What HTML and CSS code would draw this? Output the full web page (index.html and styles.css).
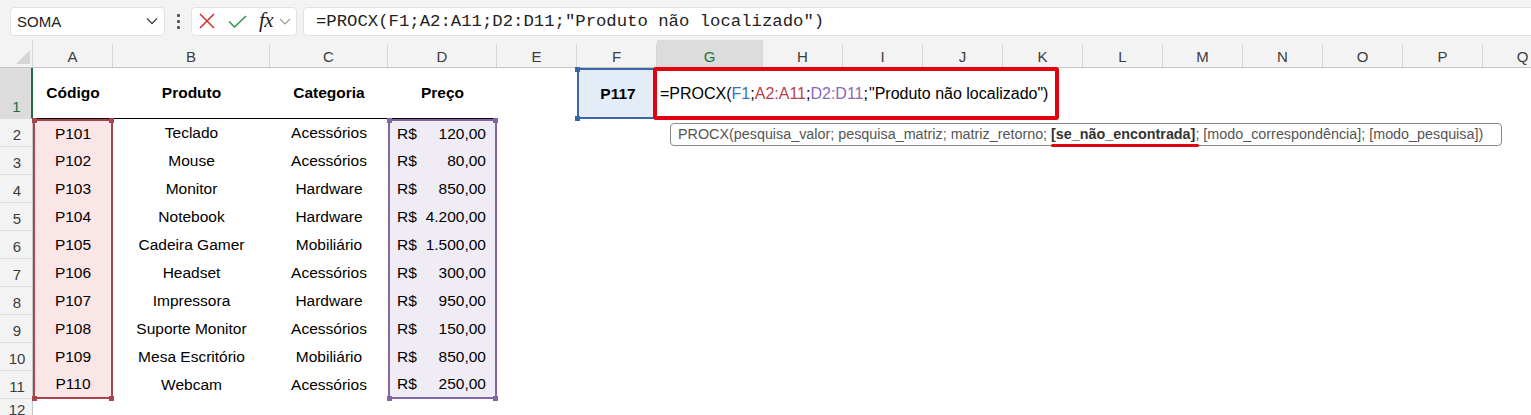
FILE: index.html
```html
<!DOCTYPE html>
<html lang="pt-BR">
<head>
<meta charset="utf-8">
<title>Excel PROCX</title>
<link rel="stylesheet" href="styles.css">
</head>
<body>
<div class="toolbar">
  <div class="namebox"><span>SOMA</span>
    <svg class="chev" width="12" height="8" viewBox="0 0 12 8"><polyline points="1,1.5 6,6.5 11,1.5" fill="none" stroke="#444" stroke-width="1.3"/></svg>
  </div>
  <div class="dots"><i></i><i></i><i></i></div>
  <div class="iconbox">
    <svg class="ix" width="16" height="16" viewBox="0 0 16 16"><path d="M1 1 L15 15 M15 1 L1 15" stroke="#d13438" stroke-width="1.6" fill="none"/></svg>
    <svg class="ic" width="19" height="13" viewBox="0 0 19 13"><polyline points="1,6.5 6.5,12 18,1" stroke="#3d9b4f" stroke-width="1.7" fill="none"/></svg>
    <span class="fx">fx</span>
    <svg class="iv" width="12" height="7" viewBox="0 0 12 7"><polyline points="1,1 6,6 11,1" fill="none" stroke="#9a9a9a" stroke-width="1.2"/></svg>
  </div>
  <div class="formulabox">=PROCX(F1;A2:A11;D2:D11;"Produto não localizado")</div>
</div>

<div class="sheet">
  <div class="row hdr">
    <div class="corner"></div>
    <div class="ch">A</div><div class="ch">B</div><div class="ch">C</div><div class="ch">D</div><div class="ch">E</div><div class="ch">F</div><div class="ch sel">G</div><div class="ch">H</div><div class="ch">I</div><div class="ch">J</div><div class="ch">K</div><div class="ch">L</div><div class="ch">M</div><div class="ch">N</div><div class="ch">O</div><div class="ch">P</div><div class="ch">Q</div>
  </div>

  <div class="row r1">
    <div class="rh sel">1</div>
    <div class="c b th">Código</div><div class="c b th">Produto</div><div class="c b th">Categoria</div><div class="c b th">Preço</div>
    <div class="c"></div>
    <div class="c b f1">P117</div>
    <div class="c edit"><span>=PROCX(</span><span class="kb">F1</span><span>;</span><span class="kr">A2:A11</span><span>;</span><span class="kp">D2:D11</span><span>;</span><span class="caret"></span><span>"Produto não localizado")</span></div>
  </div>

  <div class="row"><div class="rh">2</div><div class="c ra top">P101</div><div class="c">Teclado</div><div class="c">Acessórios</div><div class="c rd top acc"><span>R$</span><span>120,00</span></div></div>
  <div class="row"><div class="rh">3</div><div class="c ra">P102</div><div class="c">Mouse</div><div class="c">Acessórios</div><div class="c rd acc"><span>R$</span><span>80,00</span></div></div>
  <div class="row"><div class="rh">4</div><div class="c ra">P103</div><div class="c">Monitor</div><div class="c">Hardware</div><div class="c rd acc"><span>R$</span><span>850,00</span></div></div>
  <div class="row"><div class="rh">5</div><div class="c ra">P104</div><div class="c">Notebook</div><div class="c">Hardware</div><div class="c rd acc"><span>R$</span><span>4.200,00</span></div></div>
  <div class="row"><div class="rh">6</div><div class="c ra">P105</div><div class="c">Cadeira Gamer</div><div class="c">Mobiliário</div><div class="c rd acc"><span>R$</span><span>1.500,00</span></div></div>
  <div class="row"><div class="rh">7</div><div class="c ra">P106</div><div class="c">Headset</div><div class="c">Acessórios</div><div class="c rd acc"><span>R$</span><span>300,00</span></div></div>
  <div class="row"><div class="rh">8</div><div class="c ra">P107</div><div class="c">Impressora</div><div class="c">Hardware</div><div class="c rd acc"><span>R$</span><span>950,00</span></div></div>
  <div class="row"><div class="rh">9</div><div class="c ra">P108</div><div class="c">Suporte Monitor</div><div class="c">Acessórios</div><div class="c rd acc"><span>R$</span><span>150,00</span></div></div>
  <div class="row"><div class="rh">10</div><div class="c ra">P109</div><div class="c">Mesa Escritório</div><div class="c">Mobiliário</div><div class="c rd acc"><span>R$</span><span>850,00</span></div></div>
  <div class="row"><div class="rh">11</div><div class="c ra bot">P110</div><div class="c">Webcam</div><div class="c">Acessórios</div><div class="c rd bot acc"><span>R$</span><span>250,00</span></div></div>
  <div class="row"><div class="rh last">12</div></div>

  <div class="redbox"></div>
  <div class="tooltip">PROCX(pesquisa_valor; pesquisa_matriz; matriz_retorno; <b class="mark">[se_não_encontrada]</b>; [modo_correspondência]; [modo_pesquisa])</div>
</div>
</body>
</html>
```

FILE: styles.css
```css
* { box-sizing: border-box; }
body {
  margin: 0;
  width: 1531px;
  height: 415px;
  overflow: hidden;
  background: #fff;
  font-family: "Liberation Sans", Arial, sans-serif;
  color: #000;
}

.toolbar {
  height: 40px;
  background: #f3f3f3;
  display: flex;
  align-items: center;
  padding-left: 10px;
  padding-top: 4px;
  padding-bottom: 2px;
  white-space: nowrap;
  overflow: hidden;
}
.toolbar > * { flex-shrink: 0; }
.namebox {
  width: 155px;
  height: 29px;
  background: #fff;
  border: 1px solid #e2e2e2;
  border-radius: 4px;
  display: flex;
  align-items: center;
  justify-content: space-between;
  padding: 0 6px 0 6px;
  font-size: 15px;
  color: #222;
}
.dots {
  width: 26px;
  display: flex;
  flex-direction: column;
  align-items: center;
  gap: 3px;
}
.dots i { display: block; width: 3px; height: 3px; background: #555; border-radius: 1px; }
.iconbox {
  width: 106px;
  height: 29px;
  background: #fff;
  border: 1px solid #e2e2e2;
  border-radius: 4px;
  display: flex;
  align-items: center;
  padding-left: 7px;
}
.ix { margin-right: 13px; }
.ic { margin-right: 12px; }
.fx {
  font-family: "Liberation Serif", "Times New Roman", serif;
  font-style: italic;
  font-size: 21px;
  color: #222;
  letter-spacing: -0.5px;
  margin-right: 6px;
  margin-top: -2px;
}
.formulabox {
  margin-left: 6px;
  width: 1240px;
  height: 29px;
  background: #fff;
  border: 1px solid #e2e2e2;
  border-radius: 4px;
  display: flex;
  align-items: center;
  padding-left: 12px;
  font-family: "Liberation Mono", "Courier New", monospace;
  font-size: 17.3px;
  color: #222;
}

.sheet { position: relative; }
.row {
  display: grid;
  grid-template-columns: 33px 80px 157px 118px 109px 80px 80px 106px 80px 80px 80px 80px 80px 80px 80px 80px 80px 80px;
  height: 28px;
}
.row.r1 { height: 51px; }

.hdr { background: #f3f3f3; border-bottom: 1px solid #c6c6c6; }
.corner { position: relative; border-right: 1px solid #d6d6d6; }
.corner::after {
  content: "";
  position: absolute;
  right: 2px;
  bottom: 3px;
  width: 0; height: 0;
  border-left: 14px solid transparent;
  border-bottom: 14px solid #d6d6d6;
}
.ch {
  display: flex;
  align-items: center;
  justify-content: center;
  padding-top: 2px;
  font-size: 15px;
  color: #3c3c3c;
  border-right: 1px solid #d6d6d6;
  margin-top: 4px;
}
.ch.sel { background: #dcdcdc; color: #1d7044; margin-top: 0; padding-top: 6px; }

.rh {
  background: #f3f3f3;
  border-right: 1px solid #c6c6c6;
  border-bottom: 1px solid #dedede;
  display: flex;
  align-items: flex-end;
  justify-content: center;
  padding-bottom: 3px;
  padding-left: 2px;
  font-size: 15px;
  color: #3c3c3c;
}
.rh.last { padding-bottom: 0; align-items: flex-start; padding-top: 2px; }
.rh.sel { background: #dcdcdc; color: #1d7044; border-right: 2px solid #1d7044; }

.c {
  display: flex;
  align-items: center;
  justify-content: center;
  font-size: 15.5px;
  white-space: nowrap;
  position: relative;
}
.b { font-weight: bold; }
.th { border-bottom: 1px solid #000; }

.f1 {
  background: #e4ecf7;
  border: 2px solid #3a67a6;
  border-right: none;
}
.f1::before, .f1::after {
  content: "";
  position: absolute;
  left: -4px;
  width: 5px; height: 5px;
  background: #3a67a6;
}
.f1::before { top: -3px; }
.f1::after { bottom: -4px; }

.edit {
  justify-content: flex-start;
  padding-left: 3px;
  overflow: visible;
  z-index: 2;
  font-size: 16px;
}
.kb { color: #3a73b8; }
.kr { color: #b8424b; }
.kp { color: #8a69b4; }
.caret { display: inline-block; width: 1px; height: 19px; background: #000; margin: 0 1px 0 0; }

.ra {
  background: #fae6e6;
  border-left: 2px solid #a8444c;
  border-right: 2px solid #a8444c;
}
.rd {
  background: #efecf6;
  border-left: 2px solid #8166a6;
  border-right: 2px solid #8166a6;
}
.ra.top { border-top: 2px solid #a8444c; }
.rd.top { border-top: 2px solid #8166a6; }
.ra.bot { border-bottom: 2px solid #a8444c; }
.rd.bot { border-bottom: 2px solid #8166a6; }

.top::before, .top::after, .bot::before, .bot::after {
  content: "";
  position: absolute;
  width: 5px; height: 5px;
}
.ra.top::before, .ra.top::after, .ra.bot::before, .ra.bot::after { background: #a8444c; }
.rd.top::before, .rd.top::after, .rd.bot::before, .rd.bot::after { background: #8166a6; }
.top::before { left: -3px; top: -3px; }
.top::after { right: -3px; top: -3px; }
.bot::before { left: -3px; bottom: -4px; }
.bot::after { right: -3px; bottom: -4px; }

.acc { justify-content: space-between; padding: 0 9px 0 7px; }

.redbox {
  position: absolute;
  left: 653px;
  top: 27px;
  width: 406px;
  height: 53px;
  border: 4px solid #e3000f;
  border-radius: 3px;
  z-index: 3;
}
.tooltip {
  position: absolute;
  left: 670px;
  top: 83px;
  width: 832px;
  height: 23px;
  border: 1px solid #8a8a8a;
  border-radius: 4px;
  background: #fff;
  font-size: 14.35px;
  color: #555;
  padding: 2px 0 0 7px;
  white-space: nowrap;
  z-index: 4;
}
.mark { position: relative; color: #333; }
.mark::after {
  content: "";
  position: absolute;
  left: 0;
  right: -4px;
  bottom: -5px;
  height: 3px;
  background: #e3000f;
  border-radius: 2px;
}
```
